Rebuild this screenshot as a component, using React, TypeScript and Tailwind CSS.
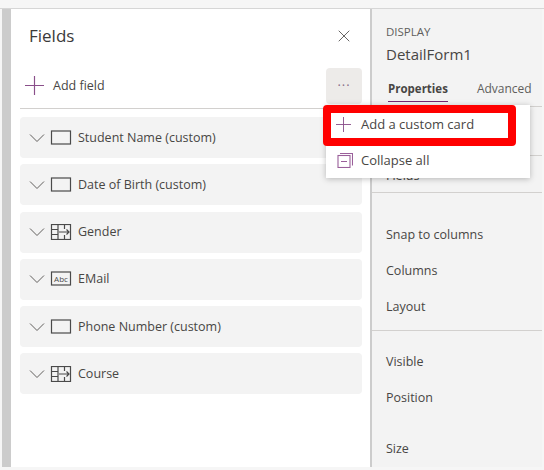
import { X } from "lucide-react";

const font = { sans: "font-['Open_Sans','Liberation_Sans',sans-serif]" };

const Chevron = () => (
  <svg width="16" height="8" viewBox="0 0 16 8" fill="none" stroke="#605e5c" strokeWidth="1">
    <path d="M1 0.5 L8 7.5 L15 0.5" />
  </svg>
);

const TextInputIcon = () => (
  <svg width="22" height="16" viewBox="0 0 22 16" fill="none" stroke="#4a4a4a" strokeWidth="1.2">
    <rect x="1.5" y="1" width="19" height="13" />
  </svg>
);

const ChoiceIcon = () => (
  <svg width="22" height="16" viewBox="0 0 22 16" fill="none" stroke="#4a4a4a" strokeWidth="1.2">
    <rect x="1.5" y="0.5" width="19" height="15" />
    <path d="M1.5 5.5H8M1.5 10.5H8M8 0.5V15.5M14.5 0.5V5M14.5 11V15.5M9 8H19M16.5 5.5L19 8L16.5 10.5" />
  </svg>
);

const AbcIcon = () => (
  <svg width="22" height="16" viewBox="0 0 22 16" fill="none">
    <rect x="1.5" y="1" width="19" height="13" stroke="#4a4a4a" strokeWidth="1.2" />
    <text x="11" y="10.5" textAnchor="middle" fontSize="8" fill="#4a4a4a" fontFamily="Open Sans, sans-serif">
      Abc
    </text>
  </svg>
);

const PlusIcon = ({ size }: { size: number }) => (
  <svg width={size} height={size} viewBox="0 0 18 18" fill="none" stroke="#8a4f8a" strokeWidth="1.1">
    <path d="M9 0V18M0 9H18" />
  </svg>
);

const CollapseIcon = () => (
  <svg width="16" height="15" viewBox="0 0 16 15" fill="none" stroke="#9a5f9a" strokeWidth="1.1">
    <rect x="1" y="2.5" width="12" height="12" />
    <path d="M3 0.5H15.5V12.5M4 8.5H10" />
  </svg>
);

const fields = [
  { name: "Student Name (custom)", icon: <TextInputIcon /> },
  { name: "Date of Birth (custom)", icon: <TextInputIcon /> },
  { name: "Gender", icon: <ChoiceIcon /> },
  { name: "EMail", icon: <AbcIcon /> },
  { name: "Phone Number (custom)", icon: <TextInputIcon /> },
  { name: "Course", icon: <ChoiceIcon /> },
];

const FieldRow = ({ name, icon }: { name: string; icon: React.ReactNode }) => (
  <div className="h-[41px] rounded bg-[#f3f3f3] flex items-center pl-[9px]">
    <Chevron />
    <span className="ml-[5px] flex">{icon}</span>
    <span className="ml-[6px] pt-[1px] text-[12.5px] text-[#484644]">{name}</span>
  </div>
);

const Prop = ({ label }: { label: string }) => (
  <div className="h-9 flex items-center pl-[14px] text-[12.5px] text-[#484644]">{label}</div>
);

export default function App() {
  return (
    <div className={`relative w-[544px] h-[470px] overflow-hidden bg-[#f6f6f6] ${font.sans}`}>
      <div className="h-[9px] border-b border-[#d6d6d6]" />
      <div className="flex h-[458px] pl-[2px] pr-[2px]">
        <div className="w-[9px] bg-[#cccccc]" />

        <div className="w-[359px] bg-white flex flex-col">
          <div className="h-[54px] flex items-center justify-between pl-[18px] pr-[16px]">
            <h1 className="text-[17px] text-[#3b3a39]">Fields</h1>
            <X size={20} strokeWidth={1} color="#484644" />
          </div>
          <div className="h-[46px] ml-[9px] border-b border-[#d2d0ce] flex items-center justify-between pb-[1px]">
            <div className="flex items-center pl-[5px]">
              <PlusIcon size={19} />
              <span className="ml-[9px] pt-[2px] text-[12.5px] text-[#484644]">Add field</span>
            </div>
            <div className="w-9 h-9 mr-2 -mb-[1px] rounded-sm bg-[#edebe9] flex items-center justify-center text-[13px] leading-none tracking-[1px] text-[#8a6f8a]">
              ···
            </div>
          </div>
          <div className="ml-[9px] mr-2 mt-2 flex flex-col gap-[6.25px]">
            {fields.map((f) => (
              <FieldRow key={f.name} name={f.name} icon={f.icon} />
            ))}
          </div>
        </div>

        <div className="w-[2px] bg-[#cccccc]" />

        <div className="flex-1 bg-[#f3f3f3] flex flex-col">
          <div className="h-[98px] border-b border-[#d2d0ce] pl-[14px] pt-[15px]">
            <div className="text-[11.5px] leading-4 text-[#605e5c]">DISPLAY</div>
            <div className="mt-[2px] text-[15px] leading-6 text-[#484644]">DetailForm1</div>
            <div className="mt-[15px] flex text-[11.5px] leading-4">
              <span className="ml-[2px] font-bold text-[#484644] border-b border-[#742774] h-[21px]">Properties</span>
              <span className="ml-[29px] text-[12px] text-[#605e5c]">Advanced</span>
            </div>
          </div>
          <div className="h-[50px] border-b border-[#d2d0ce]" />
          <div className="h-[37px] border-b border-[#d2d0ce] pt-[2px]">
            <Prop label="Fields" />
          </div>
          <div className="h-[138px] border-b border-[#d2d0ce] pt-[24px]">
            <Prop label="Snap to columns" />
            <Prop label="Columns" />
            <Prop label="Layout" />
          </div>
          <div className="pt-[13px]">
            <Prop label="Visible" />
            <Prop label="Position" />
            <div className="mt-[15px]">
              <Prop label="Size" />
            </div>
          </div>
        </div>
      </div>

      {/* popup menu */}
      <div className="absolute left-[326px] top-[105px] w-[204px] h-[73px] bg-white shadow-[0_1px_6px_rgba(0,0,0,0.25)] flex flex-col">
        <div className="h-[38px] flex items-center pl-[10px] pt-[1px]">
          <PlusIcon size={15} />
          <span className="ml-[10px] text-[13px] text-[#484644]">Add a custom card</span>
        </div>
        <div className="h-[35px] flex items-center pl-[11px]">
          <CollapseIcon />
          <span className="ml-[8px] text-[13px] text-[#484644]">Collapse all</span>
        </div>
      </div>
      <div className="absolute left-[323px] top-[105px] w-[193px] h-[41px] border-[8px] border-[#ff0000] rounded" />
    </div>
  );
}
